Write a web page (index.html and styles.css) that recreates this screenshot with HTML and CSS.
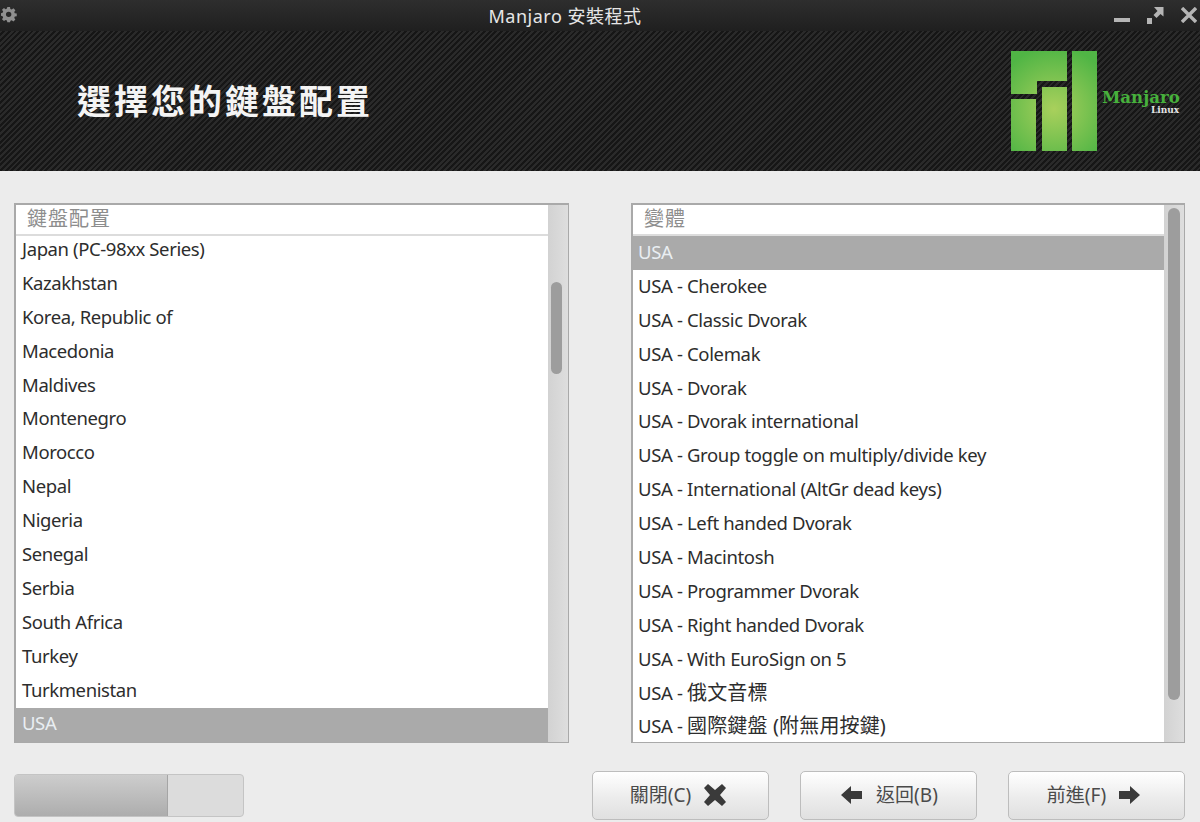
FILE: index.html
```html
<!DOCTYPE html>
<html lang="zh-TW">
<head>
<meta charset="utf-8">
<title>Manjaro 安裝程式</title>
<link rel="stylesheet" href="styles.css">
</head>
<body>
<div class="window">
  <header class="titlebar">
    <svg class="gear" width="18" height="18" viewBox="0 0 18 18"><path fill="#8f8f8f" fill-rule="evenodd" d="M7 1h3l.4 2.2 1.5.6L13.800 2.500 16 4.700l-1.300 1.900.6 1.400 2.200.4v2.900l-2.200.4-.6 1.500 1.300 1.800-2.200 2.200-1.900-1.300-1.400.6L10 18.100H7l-.4-1.900-1.500-.6-1.800 1.200L1.100 14.600l1.300-1.800-.6-1.500L0 10.900V8l1.800-.4.600-1.400L1.100 4.300l2.200-2.100 1.800 1.300 1.500-.6zM8.500 6.300a3 3 0 1 0 0 6 3 3 0 0 0 0-6z" transform="scale(.9)"/></svg>
    <span class="window-title">Manjaro 安裝程式</span>
    <div class="controls">
      <svg width="16" height="6" viewBox="0 0 16 6"><rect y="1" width="16" height="4" fill="#b5b5b5"/></svg>
      <svg width="17" height="18" viewBox="0 0 17 18"><path fill="#b5b5b5" d="M0 12h5v6H0zM7 1h9.500v9.500l-3-2.500-4 4-3-3 4-4z"/></svg>
      <svg width="16" height="16" viewBox="0 0 16 16"><path stroke="#b5b5b5" stroke-width="3.400" d="M1 1l14 14M15 1L1 15"/></svg>
    </div>
  </header>

  <section class="banner">
    <h1 class="heading">選擇您的鍵盤配置</h1>
    <svg class="logo" width="172" height="104" viewBox="0 0 172 104">
      <defs>
        <radialGradient id="g" gradientUnits="userSpaceOnUse" cx="45" cy="60" r="62">
          <stop offset="0" stop-color="#a9d05c"/>
          <stop offset="1" stop-color="#50b545"/>
        </radialGradient>
      </defs>
      <g fill="url(#g)">
        <path d="M2 2h56v30H28v13H2z"/>
        <path d="M2 50h25v52H2z"/>
        <path d="M33 38h25v64H33z"/>
        <path d="M63 2h25v100H63z"/>
      </g>
      <text class="logo-name" x="93" y="54">Manjaro</text>
      <text class="logo-sub" x="142" y="64">Linux</text>
    </svg>
  </section>

  <main class="panes">
    <section class="list">
      <div class="list-body">
        <div class="list-head">鍵盤配置</div>
        <ul class="rows rows-left">
          <li>Japan (PC-98xx Series)</li>
          <li>Kazakhstan</li>
          <li>Korea, Republic of</li>
          <li>Macedonia</li>
          <li>Maldives</li>
          <li>Montenegro</li>
          <li>Morocco</li>
          <li>Nepal</li>
          <li>Nigeria</li>
          <li>Senegal</li>
          <li>Serbia</li>
          <li>South Africa</li>
          <li>Turkey</li>
          <li>Turkmenistan</li>
          <li class="selected">USA</li>
        </ul>
      </div>
      <div class="scrollbar"><div class="thumb thumb-left"></div></div>
    </section>

    <section class="list">
      <div class="list-body">
        <div class="list-head">變體</div>
        <ul class="rows rows-right">
          <li class="selected">USA</li>
          <li>USA - Cherokee</li>
          <li>USA - Classic Dvorak</li>
          <li>USA - Colemak</li>
          <li>USA - Dvorak</li>
          <li>USA - Dvorak international</li>
          <li>USA - Group toggle on multiply/divide key</li>
          <li>USA - International (AltGr dead keys)</li>
          <li>USA - Left handed Dvorak</li>
          <li>USA - Macintosh</li>
          <li>USA - Programmer Dvorak</li>
          <li>USA - Right handed Dvorak</li>
          <li>USA - With EuroSign on 5</li>
          <li>USA - <span class="cjk">俄文音標</span></li>
          <li>USA - <span class="cjk">國際鍵盤 (附無用按鍵)</span></li>
        </ul>
      </div>
      <div class="scrollbar"><div class="thumb thumb-right"></div></div>
    </section>
  </main>

  <footer class="footer">
    <div class="progress"><div class="progress-fill"></div></div>
    <div class="buttons">
      <button class="btn btn-close"><span class="btn-label">關閉(C)</span>
        <svg width="24" height="24" viewBox="0 0 24 24"><path fill="#3a3a3a" d="M5 1l7 6 7-6 4 4-6 7 6 7-4 4-7-6-7 6-4-4 6-7-6-7z"/></svg>
      </button>
      <button class="btn btn-back">
        <svg width="22" height="20" viewBox="0 0 22 20"><path fill="#3a3a3a" d="M0 10L10 1v5h11v8H10v5z"/></svg>
        <span class="btn-label">返回(B)</span>
      </button>
      <button class="btn btn-next"><span class="btn-label">前進(F)</span>
        <svg width="22" height="20" viewBox="0 0 22 20"><path fill="#3a3a3a" d="M22 10L12 1v5H1v8h11v5z"/></svg>
      </button>
    </div>
  </footer>
</div>
</body>
</html>
```
FILE: styles.css
```css
* { box-sizing: border-box; }
html, body { margin: 0; padding: 0; }
body {
  width: 1200px;
  height: 822px;
  overflow: hidden;
  background: #ececec;
  font-family: "Noto Sans", "Noto Sans CJK TC", sans-serif;
}
.window { width: 1200px; height: 822px; display: flex; flex-direction: column; overflow: hidden; }

.titlebar {
  height: 31px;
  flex: none;
  display: flex;
  align-items: center;
  justify-content: center;
  padding-right: 70px;
  position: relative;
  background: linear-gradient(#2e2e2e, #1f1f1f);
}
.gear { position: absolute; left: 1px; top: 6px; }
.window-title { color: #e6e6e6; font-size: 18px; line-height: 28px; letter-spacing: .5px; }
.controls {
  position: absolute;
  right: 3px;
  top: 6px;
  display: flex;
  align-items: center;
  gap: 17px;
}
.controls svg:first-child { margin-top: 10px; }

.banner {
  height: 140px;
  flex: none;
  display: flex;
  align-items: center;
  justify-content: space-between;
  padding: 0 19px 0 77px;
  background-color: #1e1e1e;
  background-image: repeating-linear-gradient(135deg, #2a2a2a 0 2px, #161616 2px 4px);
}
.heading {
  margin: 0 0 3px;
  color: #f4f4f4;
  font-family: "Noto Sans CJK TC", sans-serif;
  font-size: 34px;
  font-weight: 700;
  letter-spacing: 3px;
  line-height: 40px;
}
.logo { display: block; }
.logo-name { font-family: "DejaVu Serif", serif; font-weight: 700; font-size: 16.600px; fill: #47b13c; }
.logo-sub { font-family: "DejaVu Serif", serif; font-weight: 700; font-size: 9px; fill: #e4e4e4; }

.panes {
  flex: none;
  height: 540px;
  margin-top: 32px;
  padding: 0 15px 0 14px;
  display: grid;
  grid-template-columns: 555px 554px;
  justify-content: space-between;
}
.list {
  display: flex;
  height: 540px;
  border: 2px solid #a9a9a9;
  border-right-width: 1px;
  border-bottom-width: 1px;
  background: #fff;
  overflow: hidden;
}
.list-body { flex: 1; min-width: 0; display: flex; flex-direction: column; overflow: hidden; }
.list-head {
  flex: none;
  height: 31px;
  padding-left: 11px;
  border-bottom: 2px solid #dcdcdc;
  color: #8d8d8d;
  font-size: 20px;
  line-height: 28px;
  letter-spacing: 1px;
}
.rows { list-style: none; margin: 0; padding: 0; color: #2d2d2d; font-size: 18.500px; }
.rows li {
  height: 33.900px;
  padding-left: 5px;
  line-height: 31px;
  white-space: nowrap;
  letter-spacing: -.35px;
}
.rows .cjk { font-size: 20px; letter-spacing: .15px; line-height: 20px; }
.rows-left { margin-top: -2px; }
.rows-left li { line-height: 29px; padding-left: 6px; letter-spacing: -.4px; }
.rows li.selected { background: #aaaaaa; color: #e9eef2; }

.scrollbar {
  flex: none;
  width: 20px;
  position: relative;
  background: linear-gradient(90deg, #d2d2d2, #dedede);
}
.thumb { position: absolute; background: #9d9d9d; border-radius: 6px; }
.thumb-left { left: 3px; right: 6px; top: 77px; height: 92px; }
.thumb-right { left: 4px; right: 4px; top: 3px; height: 492px; }

.footer {
  flex: 1;
  display: flex;
  align-items: flex-start;
  justify-content: space-between;
  padding: 28px 15px 0 14px;
}
.progress {
  width: 230px;
  height: 43px;
  margin-top: 3px;
  background: #dcdcdc;
  border: 1px solid #c4c4c4;
  border-radius: 4px;
  overflow: hidden;
}
.progress-fill {
  width: 153px;
  height: 100%;
  background: linear-gradient(#cdcdcd, #adadad);
  border-right: 1px solid #a5a5a5;
}
.buttons { display: flex; gap: 31px; }
.btn {
  width: 177px;
  height: 49px;
  display: flex;
  align-items: center;
  justify-content: center;
  gap: 12px;
  padding: 0 0 1px;
  background: linear-gradient(#ffffff, #ececec 55%, #e0e0e0);
  border: 1px solid #bdbdbd;
  border-radius: 5px;
  color: #4a4a4a;
  font-family: "Noto Sans", "Noto Sans CJK TC", sans-serif;
  font-size: 19px;
}
.btn-close { padding-right: 4px; }
.btn-back { padding-left: 2px; gap: 13px; }
.btn-next { padding-right: 6px; }
.btn-label { line-height: 26px; }
```
